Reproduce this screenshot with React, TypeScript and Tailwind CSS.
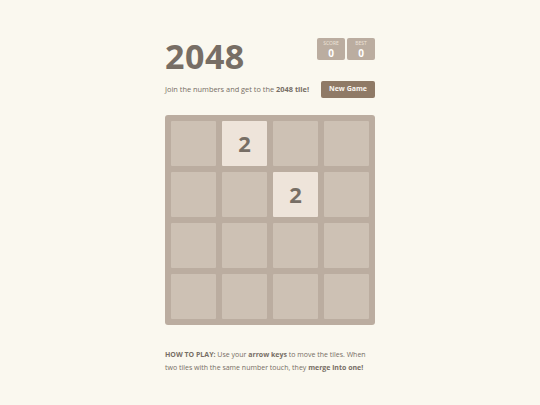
import React from 'react';

const board = [
    [0, 2, 0, 0],
    [0, 0, 2, 0],
    [0, 0, 0, 0],
    [0, 0, 0, 0],
];

function ScoreBox({ label, value }: { label: string; value: number }) {
    return (
        <div className="w-[28px] h-[22px] bg-[#bbada0] rounded-[2px] flex flex-col items-center justify-center">
            <span className="text-[5px] leading-none text-[#eee4da] uppercase">{label}</span>
            <span className="text-[10px] leading-none font-bold text-white mt-[2px]">{value}</span>
        </div>
    );
}

export default function App() {
    return (
        <div className="min-h-screen bg-[#faf8ef] text-[#776e65] font-['Open_Sans',sans-serif]">
            <div className="w-[210px] mx-auto pt-[38px]">
                {/* Heading */}
                <div className="flex justify-between items-start">
                    <h1 className="text-[34px] font-bold leading-none mt-[1px] tracking-[0.5px]">2048</h1>
                    <div className="flex gap-[2px]">
                        <ScoreBox label="Score" value={0} />
                        <ScoreBox label="Best" value={0} />
                    </div>
                </div>

                {/* Intro */}
                <div className="flex justify-between items-center mt-[8px]">
                    <p className="text-[7.4px] leading-none">
                        Join the numbers and get to the <strong className="font-bold">2048 tile!</strong>
                    </p>
                    <button className="w-[54px] h-[17px] bg-[#8f7a66] text-[#f9f6f2] text-[7px] font-bold rounded-[2px]">
                        New Game
                    </button>
                </div>

                {/* Board */}
                <div className="mt-[17px] bg-[#bbada0] rounded-[3px] p-[6px] grid grid-cols-4 gap-[6px]">
                    {board.flat().map((v, i) => (
                        <div
                            key={i}
                            className={`h-[45px] rounded-[1px] flex items-center justify-center text-[22px] font-bold ${v ? 'bg-[#eee4da]' : 'bg-[#cdc1b4]'}`}
                        >
                            {v ? v : ''}
                        </div>
                    ))}
                </div>

                {/* How to play */}
                <p className="mt-[23px] text-[7px] leading-[13px]">
                    <strong className="font-bold">HOW TO PLAY:</strong> Use your <strong className="font-bold">arrow keys</strong> to move the tiles. When two tiles with the same number touch, they <strong className="font-bold">merge into one!</strong>
                </p>
            </div>
        </div>
    );
}
